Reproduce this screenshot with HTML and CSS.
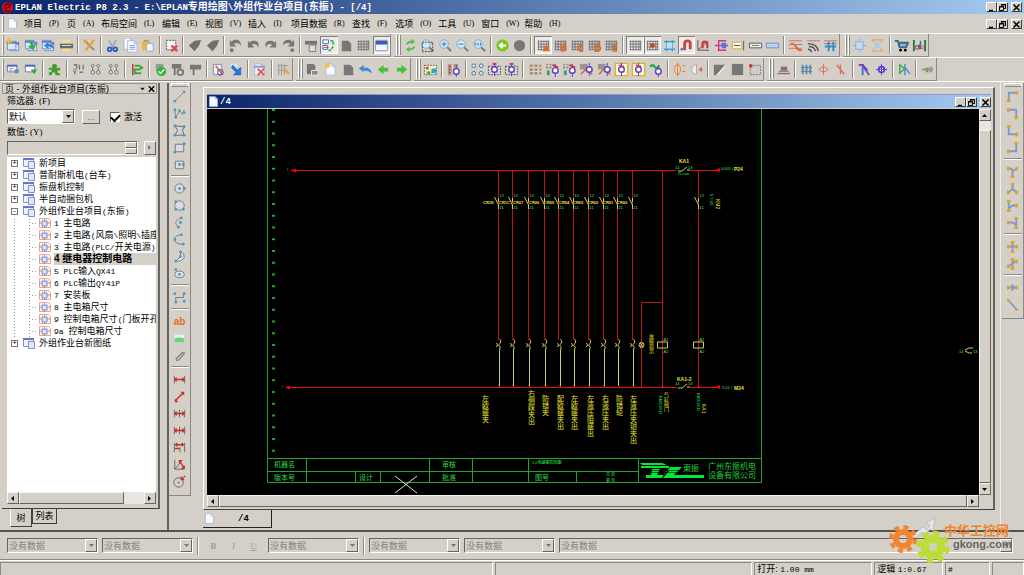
FILE: index.html
```html
<!DOCTYPE html>
<html lang="zh-CN">
<head>
<meta charset="utf-8">
<title>EPLAN Electric P8 2.3</title>
<link rel="stylesheet" href="styles.css">
</head>
<body>
<svg class="sprite" aria-hidden="true">
<defs>
<g id="sheet"><path d="M3 2h7l3 3v9H3z" fill="#f8faff" stroke="#a9b6d8"/><path d="M10 2v3h3" fill="none" stroke="#a9b6d8"/></g>
<g id="win"><rect x="4.500" y="4.500" width="9" height="9" fill="#dbe8fb" stroke="#7c92ce"/><path d="M4 5h10v2H4z" fill="#5a76c8"/></g>
<g id="grid"><path d="M2.500 3v10M5.500 3v10M8.500 3v10M11.500 3v10M13.500 3v10M2 3.500h12M2 6.500h12M2 9.500h12M2 12.500h12" stroke="#6d7077" fill="none"/></g>
<g id="lens"><circle cx="6.500" cy="6.500" r="4.500" fill="#cfe9fa" stroke="#7fa7c6"/><path d="M10 10l4 4" stroke="#777" stroke-width="2"/></g>
<g id="coil"><circle cx="8" cy="8" r="3" fill="#fff" stroke="#5a3fc8" stroke-width="1.500"/><path d="M8 1v4M8 11v4" stroke="#5a3fc8"/></g>
</defs>
<symbol id="new" viewBox="0 0 16 16"><use href="#win"/><use href="#win" x="-3" y="-1"/><path d="M3 0v7M0 3.500h7" stroke="#f0bd2c" stroke-width="2"/></symbol>
<symbol id="open" viewBox="0 0 16 16"><use href="#win"/><use href="#win" x="-3" y="-2"/><path d="M2 3q7-2 8 5l3-1-3 6-6-4 3-1q0-4-5-5z" fill="#2fb34a"/></symbol>
<symbol id="back" viewBox="0 0 16 16"><use href="#win"/><use href="#win" x="-3" y="-2"/><path d="M3 8l5-4v2q6 0 6 7-2-4-6-4v3z" fill="#3f7fd8"/></symbol>
<symbol id="print" viewBox="0 0 16 16"><path d="M4 2h8v4H4zM4 10h8v4H4z" fill="#f3df8b"/><path d="M1 6h14v5H1z" fill="#6c6c6c"/><path d="M3 8h10" stroke="#ddd"/></symbol>
<symbol id="tools" viewBox="0 0 16 16"><path d="M3 3l10 10" stroke="#8b8f98" stroke-width="2"/><path d="M13 2L4 13" stroke="#e9a527" stroke-width="2.500"/><path d="M1 3l3-2 2 3-3 2z" fill="#e9a527"/></symbol>
<symbol id="cut" viewBox="0 0 16 16"><path d="M4 2l5 9M12 2L7 11" stroke="#95a2b8" stroke-width="1.500"/><circle cx="5" cy="12" r="2" fill="none" stroke="#285fc4" stroke-width="2"/><circle cx="11" cy="12" r="2" fill="none" stroke="#285fc4" stroke-width="2"/></symbol>
<symbol id="copy" viewBox="0 0 16 16"><use href="#sheet" x="-2" y="-2"/><use href="#sheet" x="2" y="1"/><path d="M7 8h6M7 10h6M7 12h6" stroke="#7f97d4"/></symbol>
<symbol id="paste" viewBox="0 0 16 16"><path d="M2 3h9v10H2z" fill="#efb642"/><path d="M4 2h5v2H4z" fill="#999"/><path d="M7 6h7v8H7z" fill="#eef4ff" stroke="#9cacd8"/></symbol>
<symbol id="del" viewBox="0 0 16 16"><path d="M2.500 2.500h10v10h-10z" fill="#f4f4f4" stroke="#555" stroke-dasharray="2 1"/><path d="M8 8l6 6M14 8l-6 6" stroke="#e14848" stroke-width="2.500"/></symbol>
<symbol id="tag" viewBox="0 0 16 16"><path d="M2 8l6-5 7-1-2 6-5 6z" fill="#6f6f6f"/></symbol>
<symbol id="undo" viewBox="0 0 16 16"><path d="M2 3v7h7L6 7q5-2 7 3 2-8-6-7-2 0-3 2z" fill="#777"/></symbol>
<symbol id="undol" viewBox="0 0 16 16"><path d="M2 2v7h7L6 6q6-2 8 2 0-7-8-6L4 4z" fill="#777"/><circle cx="4" cy="13" r="2" fill="#777"/></symbol>
<symbol id="redo" viewBox="0 0 16 16"><path d="M14 3v7H7l3-3Q5 5 3 10 1 2 9 3q2 0 3 2z" fill="#777"/></symbol>
<symbol id="redol" viewBox="0 0 16 16"><path d="M14 2v7H7l3-3Q4 4 2 8 2 1 10 2l2 2z" fill="#777"/><circle cx="12" cy="13" r="2" fill="#777"/></symbol>
<symbol id="wins" viewBox="0 0 16 16"><path d="M1 3h13v4H1z" fill="#777"/><path d="M5.500 7.500h7v7h-7z" fill="#ddd" stroke="#777"/></symbol>
<symbol id="nav" viewBox="0 0 16 16"><path d="M2 2h6v4H2zM2 8h5v4H2z" fill="#fff" stroke="#5a5fc0"/><path d="M10 3h3v4M13 9l-3 4H7" stroke="#31b84a" stroke-width="2" stroke-dasharray="3 1" fill="none"/><path d="M3 10h5" stroke="#d04040"/></symbol>
<symbol id="gray" viewBox="0 0 16 16"><path d="M3 3h7l3 3v8H3z" fill="#777"/></symbol>
<symbol id="grid0" viewBox="0 0 16 16"><use href="#grid"/></symbol>
<symbol id="workspace" viewBox="0 0 16 16"><rect x="1.500" y="2.500" width="13" height="11" rx="1" fill="#f2f6ff" stroke="#8590bd"/><path d="M2 3h12v4H2z" fill="#3f5cb4"/></symbol>
<symbol id="refresh" viewBox="0 0 16 16"><path d="M3 7q1-4 6-4V1l4 3-4 3V5Q6 5 5 7zM13 9q-1 4-6 4v2l-4-3 4-3v2q3 0 4-2z" fill="#55bd4b"/></symbol>
<symbol id="zarea" viewBox="0 0 16 16"><use href="#lens"/><path d="M2.500 4.500h11v10h-11z" fill="none" stroke="#444" stroke-dasharray="2 1"/></symbol>
<symbol id="zin" viewBox="0 0 16 16"><use href="#lens"/><path d="M4 6.500h5M6.500 4v5" stroke="#2a6dac"/></symbol>
<symbol id="zout" viewBox="0 0 16 16"><use href="#lens"/><path d="M4 6.500h5" stroke="#2a6dac"/></symbol>
<symbol id="zfit" viewBox="0 0 16 16"><use href="#lens"/><path d="M4 5v3M6.500 5v3M9 5v3" stroke="#2a6dac"/></symbol>
<symbol id="goback" viewBox="0 0 16 16"><circle cx="8" cy="8" r="6.500" fill="#7dc51d"/><path d="M12 8H5M8 5L5 8l3 3" stroke="#fff" stroke-width="2" fill="none"/></symbol>
<symbol id="circ" viewBox="0 0 16 16"><circle cx="8" cy="8" r="6" fill="#777"/></symbol>
<symbol id="ga" viewBox="0 0 16 16"><use href="#grid"/><path d="M7 14l4-8 4 8z" fill="#e8662a"/></symbol>
<symbol id="gb" viewBox="0 0 16 16"><use href="#grid"/><path d="M9 7h3l2 2-1 1 1 2-2 2H9zM9 10.500h4" fill="none" stroke="#e8662a" stroke-width="1.500"/></symbol>
<symbol id="gc" viewBox="0 0 16 16"><use href="#grid"/><path d="M14 8h-3l-2 2v2l2 2h3" fill="none" stroke="#e8662a" stroke-width="2"/></symbol>
<symbol id="gd" viewBox="0 0 16 16"><use href="#grid"/><path d="M9 8h3l2 2v2l-2 2H9z" fill="none" stroke="#e8662a" stroke-width="2"/></symbol>
<symbol id="ge" viewBox="0 0 16 16"><use href="#grid"/><path d="M14 8h-4v6h4M10 11h4" fill="none" stroke="#e8662a" stroke-width="1.500"/></symbol>
<symbol id="gsnap" viewBox="0 0 16 16"><use href="#grid"/><circle cx="8" cy="8" r="2.500" fill="#c8441c"/></symbol>
<symbol id="osnap" viewBox="0 0 16 16"><path d="M5 2v12M11 2v12M2 4h12M2 12h12" stroke="#35a3dc" stroke-width="1.500"/><rect x="5" y="5" width="6" height="6" fill="#b9e2f5"/></symbol>
<symbol id="magnet" viewBox="0 0 16 16"><path d="M6 13V6q0-3 3-3t3 3v6" fill="none" stroke="#cf4040" stroke-width="3"/><circle cx="3" cy="12" r="1.500" fill="#3290d0"/></symbol>
<symbol id="magnet2" viewBox="0 0 16 16"><path d="M2 2v11h12M2 13L13 3" fill="none" stroke="#555"/><path d="M7 11V6q0-2 2.500-2T12 6v5" fill="none" stroke="#cf4040" stroke-width="2.500"/></symbol>
<symbol id="tree" viewBox="0 0 16 16"><path d="M1 8h14M4 3h9M4 13h9M5 3v10" stroke="#d83580" stroke-width="1.500" fill="none"/><rect x="8" y="5" width="5" height="6" fill="#5b74d5"/></symbol>
<symbol id="text" viewBox="0 0 16 16"><path d="M1.500 4.500h10v7h-10z" fill="#fffbe1" stroke="#d6a735"/><path d="M13.500 3v10M3 8h7" stroke="#555"/></symbol>
<symbol id="box" viewBox="0 0 16 16"><path d="M1.500 5.500h13v5h-13z" fill="#eef0e5" stroke="#555"/><path d="M4 8h8" stroke="#777"/></symbol>
<symbol id="boxb" viewBox="0 0 16 16"><path d="M1.500 5.500h13v5h-13z" fill="#bcd1ef" stroke="#718dc4"/></symbol>
<symbol id="wires" viewBox="0 0 16 16"><path d="M1 3h14M1 7h14M1 11h14" stroke="#c97070"/><path d="M3 6q4 0 6 4t6 3" stroke="#e8662a" stroke-width="2" fill="none"/></symbol>
<symbol id="wires2" viewBox="0 0 16 16"><path d="M1 3h14" stroke="#c97070"/><path d="M2 6q10 0 11 8M3 9q6 0 7 5M2 12q3 0 4 3" stroke="#555" stroke-width="1.500" fill="none"/></symbol>
<symbol id="wires3" viewBox="0 0 16 16"><path d="M1 3h14M1 6h14" stroke="#c97070"/><path d="M6 4v10M11 4v10M2 9h12" stroke="#2f8dc6" stroke-width="2"/></symbol>
<symbol id="cell" viewBox="0 0 16 16"><path d="M4 4h8v8H4z" fill="#c4daf3" stroke="#88aedb"/><path d="M8 1v3M8 12v3M1 8h3M12 8h3" stroke="#88aedb"/></symbol>
<symbol id="cross" viewBox="0 0 16 16"><path d="M2 2l12 12M14 2L2 14M2 2h12M2 14h12" stroke="#e79b57" fill="none"/><rect x="5" y="5" width="6" height="6" fill="#b6cadd"/></symbol>
<symbol id="cart" viewBox="0 0 16 16"><path d="M1 3h3l2 7h7l2-5H5" stroke="#39678c" stroke-width="2" fill="#89b5cf"/><circle cx="7" cy="13" r="1.500"/><circle cx="12" cy="13" r="1.500"/></symbol>
<symbol id="abbar" viewBox="0 0 16 16"><path d="M2 2v12M14 2v12" stroke="#187d4a" stroke-width="2"/><circle cx="5.500" cy="10" r="1.800" fill="none" stroke="#dc5526" stroke-width="1.500"/><path d="M7.500 7v5M9 3v9" stroke="#326fb6" stroke-width="1.500"/><circle cx="11" cy="10" r="1.500" fill="none" stroke="#dc5526"/></symbol>
<symbol id="list" viewBox="0 0 16 16"><path d="M1.500 3.500h10v7h-10z" fill="#fff" stroke="#6c78b8"/><path d="M1 3h11v2H1z" fill="#4969c3"/><path d="M9 8h5l-1 4H9z" fill="#4b98ac"/><path d="M3 7h5M3 9h4" stroke="#999"/></symbol>
<symbol id="listg" viewBox="0 0 16 16"><path d="M1.500 3.500h10v7h-10z" fill="#fff" stroke="#6c78b8"/><path d="M1 3h11v2H1z" fill="#4969c3"/><path d="M7 8h7l-3 5z" fill="#27ae3d"/></symbol>
<symbol id="puzzle" viewBox="0 0 16 16"><path d="M2 6h4q-2-4 2-4t2 4h4v3q-3-1-3 1t3 2v2H9q0-3-2-3t-2 3H2v-3q3 0 3-2T2 9z" fill="#479c30"/></symbol>
<symbol id="pins" viewBox="0 0 16 16"><path d="M3 3h3v4M4 10v3M9 3v5M13 3v5M9 11h4" stroke="#777" fill="none" stroke-width="1.500"/><circle cx="4" cy="9" r="1.500" fill="none" stroke="#777"/></symbol>
<symbol id="pins2" viewBox="0 0 16 16"><circle cx="5" cy="4" r="1.500" fill="none" stroke="#777"/><circle cx="11" cy="4" r="1.500" fill="none" stroke="#777"/><circle cx="5" cy="11" r="2" fill="none" stroke="#777"/><circle cx="11" cy="11" r="2" fill="none" stroke="#777"/><path d="M5 6v3M11 6v3" stroke="#777"/></symbol>
<symbol id="plug" viewBox="0 0 16 16"><path d="M4 2v12" stroke="#c33" stroke-width="1.500"/><path d="M6 4h5l3 2-3 2H6v4h7" fill="none" stroke="#41a33c" stroke-width="2"/></symbol>
<symbol id="check" viewBox="0 0 16 16"><path d="M3 2h8v8H3z" fill="#999"/><circle cx="9" cy="10" r="5" fill="#2db63c"/><path d="M6 10l2 2 4-4" stroke="#fff" stroke-width="1.500" fill="none"/></symbol>
<symbol id="flag" viewBox="0 0 16 16"><path d="M2 3h12v5H7v6H5V8H2z" fill="#777"/></symbol>
<symbol id="flags" viewBox="0 0 16 16"><path d="M2 2h10v5H6v7H4V7H2z" fill="#777"/><circle cx="11" cy="11" r="3" fill="none" stroke="#777" stroke-width="2"/></symbol>
<symbol id="edit" viewBox="0 0 16 16"><path d="M2.500 2.500h9v11h-9z" fill="#eef" stroke="#7e86bb"/><path d="M5 4l7 9" stroke="#d87928" stroke-width="2"/><circle cx="10" cy="11" r="3" fill="none" stroke="#43a"/></symbol>
<symbol id="down" viewBox="0 0 16 16"><path d="M2 2h7v7H2z" fill="#d4e4fb"/><path d="M4 3l5 5 4-3v9H4l3-3-5-5z" fill="#2f72cf"/></symbol>
<symbol id="delp" viewBox="0 0 16 16"><use href="#sheet"/><path d="M2 5h12" stroke="#8592cc" stroke-width="2"/><path d="M6 7l7 7M13 7l-7 7" stroke="#df5454" stroke-width="2"/></symbol>
<symbol id="rules" viewBox="0 0 16 16"><path d="M3 2v12M6 2v12M9 2v12M2 4h11M2 9h8" stroke="#999"/><path d="M9 7l5 6" stroke="#e7aa36" stroke-width="2.500"/></symbol>
<symbol id="page" viewBox="0 0 16 16"><use href="#sheet"/></symbol>
<symbol id="pagenew" viewBox="0 0 16 16"><use href="#sheet"/><path d="M5 1v6M2 4h6" stroke="#f0c23e" stroke-width="2"/></symbol>
<symbol id="pageg" viewBox="0 0 16 16"><path d="M2 2h7l2 2v9H2z" fill="#777"/><path d="M7 9h7v5H7z" fill="#888" stroke="#eee"/></symbol>
<symbol id="ublue" viewBox="0 0 16 16"><path d="M1 7l5-4v3q7-1 9 6-4-3-9-3v2z" fill="#4b87d2"/></symbol>
<symbol id="larr" viewBox="0 0 16 16"><path d="M2 8l6-5v3h5v4H8v3z" fill="#49bf38"/></symbol>
<symbol id="rarr" viewBox="0 0 16 16"><path d="M14 8L8 3v3H3v4h5v3z" fill="#49bf38"/></symbol>
<symbol id="macro" viewBox="0 0 16 16"><path d="M1.500 3.500h13v10h-13z" fill="#f8f3ba" stroke="#666" stroke-dasharray="2 1"/><path d="M3 5h3v3H3z" fill="#d94a4a"/><path d="M9 7h5v5H9z" fill="#27a6da"/><path d="M4 10h4v3H4z" fill="#42b05d"/></symbol>
<symbol id="symb" viewBox="0 0 16 16"><path d="M2 2h4v12H2zM8 2h5v4H8z" fill="#b99579"/><path d="M3 5h2M3 8h2M3 11h2" stroke="#734"/><use href="#coil" x="3" y="2"/></symbol>
<symbol id="dots" viewBox="0 0 16 16"><g fill="#d8edfb" stroke="#42718f"><circle cx="4" cy="4" r="2"/><circle cx="12" cy="4" r="2"/><circle cx="4" cy="12" r="2"/><circle cx="12" cy="12" r="2"/></g></symbol>
<symbol id="dev" viewBox="0 0 16 16"><path d="M1.500 4.500h13v9h-13z" fill="none" stroke="#555" stroke-dasharray="2 1"/><use href="#coil"/><path d="M6 2h4" stroke="#d33" stroke-width="2"/></symbol>
<symbol id="rack" viewBox="0 0 16 16"><path d="M2 4h12M2 8h12M2 12h12" stroke="#8a7c70" stroke-width="2" stroke-dasharray="3 2"/><path d="M2 3h12v10H2z" fill="none" stroke="#e6a177" stroke-dasharray="3 2"/></symbol>
<symbol id="dv1" viewBox="0 0 16 16"><path d="M1 2h6v5H1z" fill="#96958f"/><path d="M1 4h6M4 2v5" stroke="#ddd"/><path d="M2 9h3v5H2z" fill="#479d4d"/><use href="#coil" x="3" y="1"/><path d="M8 3l6 3" stroke="#d43232" stroke-width="2"/></symbol>
<symbol id="dv2" viewBox="0 0 16 16"><path d="M1 2h8v6H1z" fill="#96958f"/><path d="M2 13l5-5 7 5" fill="none" stroke="#e05a30" stroke-width="1.500"/><use href="#coil" x="3"/></symbol>
<symbol id="dv3" viewBox="0 0 16 16"><path d="M1.500 1.500h13v13h-13z" fill="#fffce4" stroke="#dfae31" stroke-width="1.500"/><use href="#coil"/><path d="M5 3l6 2" stroke="#d33" stroke-width="1.500"/></symbol>
<symbol id="dv4" viewBox="0 0 16 16"><path d="M1 5q3-3 5 0t5-1" stroke="#22a858" stroke-width="2.500" fill="none"/><use href="#coil" x="2" y="2"/></symbol>
<symbol id="orn" viewBox="0 0 16 16"><ellipse cx="6" cy="8" rx="3" ry="5" fill="#fbd9bd" stroke="#d47537"/><path d="M6 1v14M11 4h3M11 10h3" stroke="#d47537"/></symbol>
<symbol id="moon" viewBox="0 0 16 16"><path d="M8 3q-5 0-5 5t5 5z" fill="#eee" stroke="#aaa"/><path d="M14 5v6l-4-3z" fill="#df6545"/></symbol>
<symbol id="tri" viewBox="0 0 16 16"><path d="M2 3h12L4 14H2z" fill="#777"/><path d="M14 4L6 14" stroke="#fff"/></symbol>
<symbol id="sq" viewBox="0 0 16 16"><path d="M2 2h12v12H2z" fill="#777"/></symbol>
<symbol id="sel" viewBox="0 0 16 16"><path d="M3.500 3.500h11v10h-11z" fill="#ccc" stroke="#777" stroke-dasharray="2 1"/><circle cx="4" cy="4" r="2" fill="#d33"/></symbol>
<symbol id="cab" viewBox="0 0 16 16"><path d="M1 13l3-4h9l2 4z" fill="#777"/><path d="M5 5h7v4H5z" fill="#966"/><path d="M2 11h12" stroke="#ddd"/></symbol>
<symbol id="bus" viewBox="0 0 16 16"><path d="M4 3v10M8 3v10M12 3v10" stroke="#4492c9" stroke-width="2"/><path d="M2 6h12M2 10h12" stroke="#777"/></symbol>
<symbol id="rx" viewBox="0 0 16 16"><path d="M8 2v12M3 8q5-6 10 0M3 8q5 5 10 0" stroke="#df6c61" fill="none"/></symbol>
<symbol id="rx2" viewBox="0 0 16 16"><path d="M8 3v10M4 3l8 10" stroke="#df6c61" stroke-width="1.500"/></symbol>
<symbol id="junc" viewBox="0 0 16 16"><path d="M6 2v12M6 4l7 10" stroke="#4a72c9" stroke-width="2" fill="none"/><path d="M2 3h4l5 6" stroke="#7a32c5" stroke-width="2" fill="none"/></symbol>
<symbol id="target" viewBox="0 0 16 16"><circle cx="8" cy="8" r="3" fill="#fff" stroke="#5a3fd8" stroke-width="2"/><path d="M8 2v12M2 8h12" stroke="#5a3fd8"/></symbol>
<symbol id="jg" viewBox="0 0 16 16"><path d="M3 3v9l5-4.500z" stroke="#41a84e" stroke-width="1.500" fill="none"/><path d="M8.500 2v12M8 5l6 8" stroke="#4a8dc9" stroke-width="1.500"/></symbol>
<symbol id="cable" viewBox="0 0 16 16"><path d="M2 8h12" stroke="#8a8f95" stroke-width="2"/><path d="M6 6h3v5H6z" fill="#6cac48"/><path d="M10 5h3v6h-3z" fill="#999"/></symbol>
<symbol id="line" viewBox="0 0 16 16"><path d="M3 13L13 3" stroke="#888"/><circle cx="3" cy="13" r="1.500" class="dot"/><circle cx="13" cy="3" r="1.500" class="dot"/></symbol>
<symbol id="poly" viewBox="0 0 16 16"><path d="M3 4l1 8 4-7 3 4 2-5" stroke="#888" fill="none"/><circle cx="3" cy="4" r="1.500" class="dot"/><circle cx="4" cy="12" r="1.500" class="dot"/><circle cx="8" cy="5" r="1.500" class="dot"/><circle cx="13" cy="7" r="1.500" class="dot"/></symbol>
<symbol id="pgon" viewBox="0 0 16 16"><path d="M3 3l10 1-2 4 2 5H3l3-5z" stroke="#666" fill="#ccd5dc"/><circle cx="3" cy="3" r="1.500" class="dot"/><circle cx="13" cy="4" r="1.500" class="dot"/><circle cx="3" cy="13" r="1.500" class="dot"/><circle cx="13" cy="13" r="1.500" class="dot"/></symbol>
<symbol id="rect" viewBox="0 0 16 16"><path d="M3.500 4.500h9v8h-9z" stroke="#777" fill="#d7dbe0"/><circle cx="3" cy="13" r="1.500" class="dot"/><circle cx="13" cy="4" r="1.500" class="dot"/></symbol>
<symbol id="rectc" viewBox="0 0 16 16"><path d="M3.500 4.500h9v8h-9z" stroke="#777" fill="#d7dbe0"/><circle cx="8" cy="8" r="1.500" class="dot"/><circle cx="12" cy="8" r="1.500" class="dot"/></symbol>
<symbol id="cir" viewBox="0 0 16 16"><circle cx="8" cy="8" r="5" stroke="#777" fill="#d9dde2"/><circle cx="8" cy="8" r="1.500" class="dot"/><circle cx="13" cy="8" r="1.500" class="dot"/></symbol>
<symbol id="cir3" viewBox="0 0 16 16"><circle cx="8" cy="8" r="5" stroke="#777" fill="#d9dde2"/><circle cx="4" cy="4" r="1.500" class="dot"/><circle cx="4" cy="12" r="1.500" class="dot"/><circle cx="12" cy="12" r="1.500" class="dot"/></symbol>
<symbol id="arc" viewBox="0 0 16 16"><path d="M10 3q-6 1-6 6 1 4 4 4" stroke="#888" fill="none"/><circle cx="10" cy="3" r="1.500" class="dot"/><circle cx="9" cy="8" r="1.500" class="dot"/><circle cx="7" cy="13" r="1.500" class="dot"/></symbol>
<symbol id="arc3" viewBox="0 0 16 16"><path d="M10 3q-7 0-7 5t8 5" stroke="#777" fill="none"/><circle cx="10" cy="3" r="1.500" class="dot"/><circle cx="3" cy="8" r="1.500" class="dot"/><circle cx="12" cy="13" r="1.500" class="dot"/></symbol>
<symbol id="sector" viewBox="0 0 16 16"><path d="M9 3q5 2 4 6-3 5-9 4l5-5z" stroke="#777" fill="#dde1e5"/><circle cx="9" cy="3" r="1.500" class="dot"/><circle cx="9" cy="8" r="1.500" class="dot"/><circle cx="4" cy="13" r="1.500" class="dot"/></symbol>
<symbol id="ell" viewBox="0 0 16 16"><ellipse cx="8" cy="9" rx="5" ry="3.500" stroke="#777" fill="#dde1e5"/><circle cx="8" cy="9" r="1.500" class="dot"/><circle cx="4" cy="4" r="1.500" class="dot"/></symbol>
<symbol id="spline" viewBox="0 0 16 16"><path d="M4 13V8h8V4" stroke="#777" fill="none"/><circle cx="3" cy="4" r="1.500" class="dot"/><circle cx="4" cy="13" r="1.500" class="dot"/><circle cx="13" cy="4" r="1.500" class="dot"/><circle cx="13" cy="12" r="1.500" class="dot"/></symbol>
<symbol id="pic" viewBox="0 0 16 16"><path d="M3 4h10v4H3z" fill="#e0f2fa"/><path d="M3 8q5-2 10 0v4H3z" fill="#65d775"/></symbol>
<symbol id="clip" viewBox="0 0 16 16"><path d="M4 12l7-7q2-1 2 1l-6 7q-3 1-2-2l6-6" stroke="#888" stroke-width="1.500" fill="none"/></symbol>
<symbol id="dim" viewBox="0 0 16 16"><path d="M2.500 4v8M13.500 4v8" stroke="#666"/><path d="M3 8h10M5 6L3 8l2 2M11 6l2 2-2 2" stroke="#c62d2d" fill="none" stroke-width="1.500"/></symbol>
<symbol id="dimd" viewBox="0 0 16 16"><path d="M4 12l8-8" stroke="#c62d2d" stroke-width="1.500"/><path d="M3 10v4h4zM9 3h4v4z" fill="#c62d2d"/></symbol>
<symbol id="dimc" viewBox="0 0 16 16"><path d="M2.500 4v8M8 4v8M13.500 4v8" stroke="#666"/><path d="M3 8h10M5 6L3 8l2 2M11 6l2 2-2 2" stroke="#c62d2d" fill="none" stroke-width="1.500"/></symbol>
<symbol id="dimb" viewBox="0 0 16 16"><path d="M2.500 3v10M13.500 3v10M8.500 8v5" stroke="#666"/><path d="M3 5h10M3 9h5M5 3v4M11 3v4" stroke="#c62d2d" stroke-width="1.500"/></symbol>
<symbol id="dima" viewBox="0 0 16 16"><path d="M3 3v10h10M3 13l6-7" stroke="#666" fill="none"/><path d="M8 4l5 8M8 7V4h3M10 12h3V9" stroke="#c62d2d" stroke-width="1.500" fill="none"/></symbol>
<symbol id="dimr" viewBox="0 0 16 16"><circle cx="7" cy="9" r="5" stroke="#666" fill="none"/><path d="M14 2l-4 4M10 3v3h3" stroke="#c62d2d" stroke-width="1.500" fill="none"/><circle cx="7" cy="9" r="1" fill="#c55"/></symbol>
<symbol id="r1" viewBox="0 0 16 16"><path d="M4 13V4h9" class="pipe"/><path d="M2 11h4v3H2zM11 2h3v4h-3z" class="pad"/></symbol>
<symbol id="r2" viewBox="0 0 16 16"><path d="M3 4h9v9" class="pipe"/><path d="M2 2h3v4H2zM10 11h4v3h-4z" class="pad"/></symbol>
<symbol id="r3" viewBox="0 0 16 16"><path d="M4 3v9h9" class="pipe"/><path d="M2 2h4v3H2zM11 10h3v4h-3z" class="pad"/></symbol>
<symbol id="r4" viewBox="0 0 16 16"><path d="M12 3v9H3" class="pipe"/><path d="M10 2h4v3h-4zM2 10h3v4H2z" class="pad"/></symbol>
<symbol id="r5" viewBox="0 0 16 16"><path d="M3 5h4l1 3v5M8 8l4-3" class="pipe"/><path d="M2 3h3v4H2zM11 3h3v4h-3zM6 12h4v3H6z" class="pad"/></symbol>
<symbol id="r6" viewBox="0 0 16 16"><path d="M3 12l5-3V3M8 8l4 4" class="pipe"/><path d="M2 10h3v4H2zM11 10h3v4h-3zM6 2h4v3H6z" class="pad"/></symbol>
<symbol id="r7" viewBox="0 0 16 16"><path d="M4 3v10M4 11l4-3h5" class="pipe"/><path d="M2 2h4v3H2zM2 12h4v3H2zM11 6h3v4h-3z" class="pad"/></symbol>
<symbol id="r8" viewBox="0 0 16 16"><path d="M12 3v10M12 11L8 8H3" class="pipe"/><path d="M10 2h4v3h-4zM10 12h4v3h-4zM2 6h3v4H2z" class="pad"/></symbol>
<symbol id="r9" viewBox="0 0 16 16"><path d="M8 3v10M3 8h10" class="pipe"/><path d="M6 2h4v3H6zM6 12h4v3H6zM2 6h3v4H2zM11 6h3v4h-3z" class="pad"/></symbol>
<symbol id="r9b" viewBox="0 0 16 16"><path d="M8 3v10M3 11l5-3 4-3" class="pipe"/><path d="M6 2h4v3H6zM6 12h4v3H6zM2 9h3v4H2zM11 4h3v4h-3z" class="pad"/></symbol>
<symbol id="r10" viewBox="0 0 16 16"><path d="M3 8h10M7 5l3 3-3 3" class="pipe"/><path d="M2 6h3v4H2zM11 6h3v4h-3z" class="pad"/></symbol>
<symbol id="r11" viewBox="0 0 16 16"><path d="M4 4l8 9" class="pipe"/><path d="M2 2h3v3H2zM11 12h3v3h-3z" class="pad"/></symbol>
<symbol id="proj" viewBox="0 0 14 12"><path d="M.5 1.500h10v8H.5z" fill="#eef2ff" stroke="#8790c5"/><path d="M0 1h11v2H0z" fill="#6577cf"/><path d="M5.500 4.500h6v7h-6z" fill="#dfe8fc" stroke="#8790c5"/></symbol>
<symbol id="sch" viewBox="0 0 14 12"><path d="M1.500 1.500h9l2 2v7h-11z" fill="#fff3ee" stroke="#e3a79b"/><path d="M4 4h5v5H4z" fill="#d6e6fa" stroke="#6b8fcd"/><path d="M1 6h3M9 6h4M6.500 2v2M6.500 9v2" stroke="#d98476"/></symbol>
<symbol id="min" viewBox="0 0 9 9"><path d="M2 7.500h4" stroke="#000" stroke-width="1.500"/></symbol>
<symbol id="res" viewBox="0 0 9 9"><path d="M3.500 3V1.500h4v4H6M1.500 3.500h4v4h-4zM1 4h5M3 2h5" fill="none" stroke="#000"/></symbol>
<symbol id="cls" viewBox="0 0 9 9"><path d="M1.500 1.500l6 6M7.500 1.500l-6 6" stroke="#000" stroke-width="1.500"/></symbol>
<symbol id="au" viewBox="0 0 9 9"><path d="M2 6h5L4.500 3z"/></symbol>
<symbol id="ad" viewBox="0 0 9 9"><path d="M2 3h5L4.500 6z"/></symbol>
<symbol id="al" viewBox="0 0 9 9"><path d="M6 2v5L3 4.500z"/></symbol>
<symbol id="ar" viewBox="0 0 9 9"><path d="M3 2v5l3-2.500z"/></symbol>
</svg>

<header class="titlebar">
  <svg class="logo" viewBox="0 0 14 14"><circle cx="7" cy="7" r="6" fill="#d8101c"/><path d="M11 10Q5 13 4 8q0-5 4-5 3 1 1.500 3L5 8" stroke="#5a0508" stroke-width="1.500" fill="none"/></svg>
  <h1 class="caption"><span class="mono">EPLAN Electric P8 2.3 - E:\EPLAN</span>专用绘图<span class="mono">\</span>外组作业台项目<span class="mono">(</span>东振<span class="mono">) - [/4]</span></h1>
  <div class="winbtns"><button aria-label="最小化"><svg><use href="#min"/></svg></button><button aria-label="还原"><svg><use href="#res"/></svg></button><button class="close" aria-label="关闭"><svg><use href="#cls"/></svg></button></div>
</header>

<nav class="menubar">
  <i class="grip"></i><svg class="docicon"><use href="#page"/></svg>
  <button>项目<span>(P)</span></button><button>页<span>(A)</span></button><button>布局空间<span>(L)</span></button><button>编辑<span>(E)</span></button><button>视图<span>(V)</span></button><button>插入<span>(I)</span></button><button>项目数据<span>(R)</span></button><button>查找<span>(F)</span></button><button>选项<span>(O)</span></button><button>工具<span>(U)</span></button><button>窗口<span>(W)</span></button><button>帮助<span>(H)</span></button>
  <div class="winbtns"><button aria-label="最小化"><svg><use href="#min"/></svg></button><button aria-label="还原"><svg><use href="#res"/></svg></button><button class="close" aria-label="关闭"><svg><use href="#cls"/></svg></button></div>
</nav>

<div class="toolrow">
  <div class="toolbar t1"><i class="grip"></i>
    <button aria-label="新建"><svg><use href="#new"/></svg></button><button aria-label="打开"><svg><use href="#open"/></svg></button><button aria-label="恢复"><svg><use href="#back"/></svg></button><button aria-label="打印"><svg><use href="#print"/></svg></button><i class="sep"></i>
    <button aria-label="设置"><svg><use href="#tools"/></svg></button><i class="sep"></i>
    <button aria-label="剪切"><svg><use href="#cut"/></svg></button><button aria-label="复制"><svg><use href="#copy"/></svg></button><button aria-label="粘贴"><svg><use href="#paste"/></svg></button><i class="sep"></i>
    <button aria-label="删除"><svg><use href="#del"/></svg></button><i class="sep"></i>
    <button aria-label="标签"><svg><use href="#tag"/></svg></button><button aria-label="标记"><svg><use href="#tag"/></svg></button><i class="sep"></i>
    <button aria-label="撤消列表"><svg><use href="#undol"/></svg></button><button aria-label="撤消"><svg><use href="#undo"/></svg></button><button aria-label="重做"><svg><use href="#redo"/></svg></button><button aria-label="重做列表"><svg><use href="#redol"/></svg></button><i class="sep"></i>
    <button aria-label="窗口"><svg><use href="#wins"/></svg></button><button class="on" aria-label="导航器"><svg><use href="#nav"/></svg></button><button aria-label="页"><svg><use href="#gray"/></svg></button><button aria-label="表格"><svg><use href="#grid0"/></svg></button><button class="on" aria-label="工作区"><svg><use href="#workspace"/></svg></button>
  </div>
  <div class="toolbar t2"><i class="grip"></i><i class="grip"></i>
    <button aria-label="刷新"><svg><use href="#refresh"/></svg></button><button aria-label="窗口缩放"><svg><use href="#zarea"/></svg></button><button aria-label="放大"><svg><use href="#zin"/></svg></button><button aria-label="缩小"><svg><use href="#zout"/></svg></button><button aria-label="整页"><svg><use href="#zfit"/></svg></button><i class="sep"></i>
    <button aria-label="后退"><svg><use href="#goback"/></svg></button><button aria-label="前进"><svg><use href="#circ"/></svg></button><i class="sep"></i>
    <button class="on" aria-label="栅格A"><svg><use href="#ga"/></svg></button><button aria-label="栅格B"><svg><use href="#gb"/></svg></button><button aria-label="栅格C"><svg><use href="#gc"/></svg></button><button aria-label="栅格D"><svg><use href="#gd"/></svg></button><button aria-label="栅格E"><svg><use href="#ge"/></svg></button><i class="sep"></i>
    <button class="on" aria-label="栅格"><svg><use href="#grid0"/></svg></button><button class="on" aria-label="捕捉"><svg><use href="#gsnap"/></svg></button><button aria-label="对齐"><svg><use href="#osnap"/></svg></button><button class="on" aria-label="对象捕捉"><svg><use href="#magnet"/></svg></button><button aria-label="设计模式"><svg><use href="#magnet2"/></svg></button><button aria-label="连接"><svg><use href="#tree"/></svg></button><button aria-label="文本"><svg><use href="#text"/></svg></button><button aria-label="框"><svg><use href="#box"/></svg></button><button aria-label="输入框"><svg><use href="#boxb"/></svg></button><i class="sep"></i>
    <button aria-label="连线"><svg><use href="#wires"/></svg></button><button aria-label="电缆"><svg><use href="#wires2"/></svg></button><button aria-label="母线"><svg><use href="#wires3"/></svg></button>
  </div>
  <div class="toolbar t3"><i class="grip"></i><i class="grip"></i>
    <button aria-label="单元"><svg><use href="#cell"/></svg></button><button aria-label="展开"><svg><use href="#cross"/></svg></button><i class="sep"></i>
    <button aria-label="部件"><svg><use href="#cart"/></svg></button><button aria-label="翻译"><svg><use href="#abbar"/></svg></button>
  </div>
</div>

<div class="toolrow">
  <div class="toolbar t4"><i class="grip"></i>
    <button aria-label="清单"><svg><use href="#list"/></svg></button><button aria-label="更新"><svg><use href="#listg"/></svg></button><i class="sep"></i>
    <button aria-label="插件"><svg><use href="#puzzle"/></svg></button><i class="sep"></i>
    <button aria-label="触点"><svg><use href="#pins"/></svg></button><button aria-label="端子"><svg><use href="#pins2"/></svg></button><button aria-label="引脚"><svg><use href="#pins2"/></svg></button><i class="sep"></i>
    <button aria-label="插头"><svg><use href="#plug"/></svg></button><i class="sep"></i>
    <button aria-label="检查"><svg><use href="#check"/></svg></button><button aria-label="消息"><svg><use href="#flags"/></svg></button><button aria-label="标志"><svg><use href="#flag"/></svg></button><i class="sep"></i>
    <button aria-label="编辑"><svg><use href="#edit"/></svg></button><button aria-label="导入"><svg><use href="#down"/></svg></button><i class="sep"></i>
    <button aria-label="移除"><svg><use href="#delp"/></svg></button><i class="sep"></i>
    <button aria-label="规则"><svg><use href="#rules"/></svg></button>
  </div>
  <div class="toolbar t5"><i class="grip"></i><i class="grip"></i>
    <button aria-label="页宏"><svg><use href="#pageg"/></svg></button><button aria-label="新建页"><svg><use href="#pagenew"/></svg></button><button aria-label="页属性"><svg><use href="#gray"/></svg></button><button aria-label="返回"><svg><use href="#ublue"/></svg></button><button aria-label="上一页"><svg><use href="#larr"/></svg></button><button aria-label="下一页"><svg><use href="#rarr"/></svg></button>
  </div>
  <div class="toolbar t6"><i class="grip"></i><i class="grip"></i>
    <button aria-label="宏"><svg><use href="#macro"/></svg></button><i class="sep"></i>
    <button aria-label="符号"><svg><use href="#symb"/></svg></button><i class="sep"></i>
    <button aria-label="黑盒"><svg><use href="#dots"/></svg></button><button aria-label="设备"><svg><use href="#dev"/></svg></button><button aria-label="设备端子"><svg><use href="#dev"/></svg></button><i class="sep"></i>
    <button aria-label="机架"><svg><use href="#rack"/></svg></button><button aria-label="设备1"><svg><use href="#dv1"/></svg></button><button aria-label="设备2"><svg><use href="#dv1"/></svg></button><button aria-label="设备3"><svg><use href="#dv2"/></svg></button><button aria-label="设备4"><svg><use href="#dv2"/></svg></button><button aria-label="设备5"><svg><use href="#dv3"/></svg></button><button aria-label="设备6"><svg><use href="#dv3"/></svg></button><button aria-label="设备7"><svg><use href="#dv4"/></svg></button><i class="sep"></i>
    <button aria-label="屏蔽"><svg><use href="#orn"/></svg></button><button aria-label="中断"><svg><use href="#moon"/></svg></button><i class="sep"></i>
    <button aria-label="角"><svg><use href="#tri"/></svg></button><button aria-label="面"><svg><use href="#sq"/></svg></button><button aria-label="选择"><svg><use href="#sel"/></svg></button>
  </div>
  <div class="toolbar t7"><i class="grip"></i><i class="grip"></i>
    <button aria-label="安装板"><svg><use href="#cab"/></svg></button><i class="sep"></i>
    <button aria-label="总线"><svg><use href="#bus"/></svg></button><button aria-label="断点"><svg><use href="#rx"/></svg></button><button aria-label="交叉"><svg><use href="#rx2"/></svg></button><i class="sep"></i>
    <button aria-label="节点"><svg><use href="#junc"/></svg></button><button aria-label="电位"><svg><use href="#target"/></svg></button><i class="sep"></i>
    <button aria-label="网络"><svg><use href="#jg"/></svg></button><i class="sep"></i>
    <button aria-label="电缆"><svg><use href="#cable"/></svg></button>
  </div>
</div>

<main class="work">
  <aside class="navigator">
    <section class="panel">
      <h2 class="panelhead"><span>页 - 外组作业台项目(东振)</span><button aria-label="菜单"><svg><use href="#ad"/></svg></button><button aria-label="关闭"><svg><use href="#cls"/></svg></button></h2>
      <div class="filters">
        <label for="filter">筛选器: <span class="serif">(F)</span></label>
        <div class="frow"><span class="combo"><select id="filter"><option>默认</option></select><i class="drop"><svg><use href="#ad"/></svg></i></span><button class="more">...</button><label class="tick"><input type="checkbox" checked>激活</label></div>
        <label for="value">数值: <span class="serif">(Y)</span></label>
        <div class="frow"><span class="spin"><input id="value" type="text"><span><button aria-label="上"></button><button aria-label="下"></button></span></span><button class="go" aria-label="应用"><svg><use href="#ar"/></svg></button></div>
      </div>
      <div class="treebox">
        <ul class="tree">
          <li><i class="pm">+</i><svg><use href="#proj"/></svg>新项目</li>
          <li><i class="pm">+</i><svg><use href="#proj"/></svg>普耐斯机电<b>(</b>台车<b>)</b></li>
          <li><i class="pm">+</i><svg><use href="#proj"/></svg>振盘机控制</li>
          <li><i class="pm">+</i><svg><use href="#proj"/></svg>半自动捆包机</li>
          <li><i class="pm">-</i><svg><use href="#proj"/></svg>外组作业台项目<b>(</b>东振<b>)</b></li>
          <li class="kid"><svg><use href="#sch"/></svg><b>1 </b>主电路</li>
          <li class="kid"><svg><use href="#sch"/></svg><b>2 </b>主电路<b>(</b>风扇<b>\</b>照明<b>\</b>插座<b>)</b></li>
          <li class="kid"><svg><use href="#sch"/></svg><b>3 </b>主电路<b>(PLC/</b>开关电源<b>)</b></li>
          <li class="kid cur"><svg><use href="#sch"/></svg><span>4 继电器控制电路</span></li>
          <li class="kid"><svg><use href="#sch"/></svg><b>5 PLC</b>输入<b>QX41</b></li>
          <li class="kid"><svg><use href="#sch"/></svg><b>6 PLC</b>输出<b>QY41P</b></li>
          <li class="kid"><svg><use href="#sch"/></svg><b>7 </b>安装板</li>
          <li class="kid"><svg><use href="#sch"/></svg><b>8 </b>主电箱尺寸</li>
          <li class="kid"><svg><use href="#sch"/></svg><b>9 </b>控制电箱尺寸<b>(</b>门板开孔<b>)</b></li>
          <li class="kid"><svg><use href="#sch"/></svg><b>9a </b>控制电箱尺寸</li>
          <li><i class="pm">+</i><svg><use href="#proj"/></svg>外组作业台新图纸</li>
        </ul>
        <div class="hscroll"><button aria-label="左"><svg><use href="#al"/></svg></button><i class="thumb"></i><i class="track"></i><button aria-label="右"><svg><use href="#ar"/></svg></button></div>
      </div>
    </section>
    <div class="tabs"><button class="active">树</button><button>列表</button></div>
  </aside>

  <div class="vdock left"><div class="vbar"><i class="hgrip"></i>
    <button aria-label="直线"><svg><use href="#line"/></svg></button><button aria-label="折线"><svg><use href="#poly"/></svg></button><button aria-label="多边形"><svg><use href="#pgon"/></svg></button><button aria-label="长方形"><svg><use href="#rect"/></svg></button><button aria-label="中心长方形"><svg><use href="#rectc"/></svg></button><i class="hsep"></i>
    <button aria-label="圆"><svg><use href="#cir"/></svg></button><button aria-label="三点圆"><svg><use href="#cir3"/></svg></button><button aria-label="圆弧"><svg><use href="#arc"/></svg></button><button aria-label="三点圆弧"><svg><use href="#arc3"/></svg></button><button aria-label="扇形"><svg><use href="#sector"/></svg></button><button aria-label="椭圆"><svg><use href="#ell"/></svg></button><i class="hsep"></i>
    <button aria-label="样条"><svg><use href="#spline"/></svg></button><i class="hsep"></i>
    <button class="ab">ab</button><button aria-label="图片"><svg><use href="#pic"/></svg></button><button aria-label="超链接"><svg><use href="#clip"/></svg></button><i class="hsep"></i>
    <button aria-label="线性尺寸"><svg><use href="#dim"/></svg></button><button aria-label="对齐尺寸"><svg><use href="#dimd"/></svg></button><button aria-label="连续尺寸"><svg><use href="#dimc"/></svg></button><button aria-label="增量尺寸"><svg><use href="#dimc"/></svg></button><button aria-label="基线尺寸"><svg><use href="#dimb"/></svg></button><button aria-label="角度尺寸"><svg><use href="#dima"/></svg></button><button aria-label="半径尺寸"><svg><use href="#dimr"/></svg></button>
  </div></div>

  <div class="mdi">
    <section class="child">
      <header class="childbar"><svg class="docicon"><use href="#page"/></svg><h2>/4</h2><div class="winbtns"><button aria-label="最小化"><svg><use href="#min"/></svg></button><button aria-label="还原"><svg><use href="#res"/></svg></button><button class="close" aria-label="关闭"><svg><use href="#cls"/></svg></button></div></header>
      <div class="view">
        <svg class="sheet" viewBox="207 110 772 384" preserveAspectRatio="xMinYMin meet">
          <g class="frame" fill="none">
            <path d="M267.500 110V483.500H761.500V110M267 459.500H762M267 472.500H638M306.500 459V484M355.500 472V484M380.500 472V484M429.500 459V484M472.500 459V484M528.500 459V484M576.500 472V484M638.500 459V484"/>
            <path d="M273.500 110V454" stroke-width="3" stroke-dasharray="2 9.750"/>
          </g>
          <g class="wire" fill="none">
            <path d="M291 171.500H676M690 171.500H718M286 388.500H677M690 388.500H718"/>
            <path class="dim" d="M498.500 171V341M512.500 171V341M528.500 171V341M544.500 171V341M558.500 171V341M573.500 171V341M588.500 171V341M603.500 171V341M617.500 171V341M632.500 171V341M662.500 171V388M698.500 171V388M641.500 388V303.500H662"/>
            <path fill="#f00" stroke="none" d="M291 171.500l5-2v4zM285 388.500l5-2v4zM720 169v4l-5-2zM720 386v4l-5-2z"/>
            <path d="M498 386l3 3M512 386l3 3M528 386l4 3M544 386l4 3M559 386l3 3M573 386l3 3M588 386l3 3M603 386l3 3M618 386l3 3M632 386l4 3M662 386l3 3M698 386l3 3"/>
          </g>
          <defs>
            <g id="sw"><path d="M0 199V203M-4 198L0 206V210" class="yel"/><text x="1" y="198" class="g">12</text><text x="1" y="210" class="g">11</text></g>
            <g id="plugin"><path d="M0 340q3 3-1 6 3 2 1 5v36M-3 344q2 2 0 4" class="yel"/></g>
            <g id="relay"><path d="M-5 343H5V349H-5z" class="yel" fill="#000"/><text x="1" y="342" class="g">A1</text><text x="1" y="354" class="g">A2</text></g>
          </defs>
          <use href="#sw" x="498.500"/><use href="#sw" x="512.500"/><use href="#sw" x="528.500"/><use href="#sw" x="544.500"/><use href="#sw" x="558.500"/><use href="#sw" x="573.500"/><use href="#sw" x="588.500"/><use href="#sw" x="603.500"/><use href="#sw" x="617.500"/><use href="#sw" x="632.500"/><use href="#sw" x="698.500"/>
          <use href="#plugin" x="499.500"/><use href="#plugin" x="513.500"/><use href="#plugin" x="529.500"/><use href="#plugin" x="545.500"/><use href="#plugin" x="560.500"/><use href="#plugin" x="574.500"/><use href="#plugin" x="589.500"/><use href="#plugin" x="604.500"/><use href="#plugin" x="618.500"/><use href="#plugin" x="633.500"/>
          <use href="#relay" x="662.500"/><use href="#relay" x="698.500"/>
          <g class="yel"><circle cx="641.500" cy="346" r="2.500"/><path d="M640 344l3 4M643 344l-3 4M678 172h4l5-4M687 171h3M678 389h4l5-4M687 388h3M965 351l4-2h4M965 352l4 2h3"/></g>
          <g class="y tag"><text x="483" y="205">CR1D</text><text x="499" y="205">CR1C</text><text x="513" y="205">CR07</text><text x="529" y="205">CR06</text><text x="544" y="205">CR05</text><text x="559" y="205">CR04</text><text x="573" y="205">CR03</text><text x="588" y="205">CR02</text><text x="603" y="205">CR01</text><text x="617" y="205">CR00</text></g>
          <g class="y tiny"><text x="679" y="164">KA1</text><text x="734" y="172">P24</text><text x="677" y="382">KA1-2</text><text x="734" y="391">M24</text></g>
          <g class="g"><text x="675" y="170">14</text><text x="688" y="170">13</text><text x="678" y="176">/5.con</text><text x="721" y="171">0.001 /</text><text x="722" y="390">5.01 /</text><text x="675" y="386">14</text><text x="688" y="386">13</text><text x="959" y="354">14</text><text x="973" y="354">13</text><text x="287" y="172">/</text><text x="282" y="389">/</text></g>
          <g class="y vert"><text x="485" y="396">左欧盛夹</text><text x="531" y="391">右侧踩夹出</text><text x="545" y="396">防错夹</text><text x="560" y="396">配欧盛夹出</text><text x="574" y="396">左欧盛夹出</text><text x="590" y="396">左液压阻盛出</text><text x="605" y="396">右液压夹出</text><text x="619" y="396">防错轮</text><text x="633" y="396">左液压夹钳夹出</text><text class="sm" x="651" y="335">故障指示</text><text class="sm" x="666" y="393">气缸阀门</text></g>
          <g class="side"><text class="y" transform="translate(702 405) rotate(90)">KA1</text><text class="g" transform="translate(659 397) rotate(90)">KM2/24:D</text><text class="g" transform="translate(697 394) rotate(90)">KM2/24:D</text><text class="y" transform="translate(716 200) rotate(90)">KM2</text><text class="g" transform="translate(710 195) rotate(90)">5.7:40</text></g>
          <g class="blk"><text x="274" y="468">机器名</text><text x="274" y="481">版本号</text><text x="442" y="468">审核</text><text x="442" y="481">批准</text><text x="359" y="481">设计</text><text x="535" y="481">图号</text><text class="g" x="532" y="465">1.0电路图控制图</text><text class="g" x="606" y="477">共 页</text><text class="g" x="606" y="483">第 页</text></g>
          <path fill="#00e83a" d="M640 464h22l5 2h-25zM641 467h28v2h-28zM652 470h8l-3 6h7l6-8h12l-8 8h30v3h-41l6-7h-3l-4 7h-16v-3h5z"/>
          <path d="M646 471.500h58M646 473.500h58" stroke="#000" stroke-width=".6"/>
          <g class="brand"><text x="683" y="472">東振</text><text x="708" y="470">广州东振机电</text><text x="708" y="479">设备有限公司</text></g>
          <path d="M395 477l22 17M417 477l-22 17" stroke="#ddd" fill="none"/>
        </svg>
        <div class="vscroll"><button aria-label="上"><svg><use href="#au"/></svg></button><i class="track"></i><i class="thumb"></i><button aria-label="下"><svg><use href="#ad"/></svg></button></div>
        <div class="hscroll"><button aria-label="左"><svg><use href="#al"/></svg></button><i class="thumb"></i><button aria-label="右"><svg><use href="#ar"/></svg></button></div>
        <i></i>
      </div>
    </section>
    <div class="doctabs"><button><svg class="docicon"><use href="#page"/></svg><span>/4</span></button><i></i></div>
  </div>

  <div class="vdock right"><div class="vbar"><i class="hgrip"></i>
    <button aria-label="角右下"><svg><use href="#r1"/></svg></button><button aria-label="角左下"><svg><use href="#r2"/></svg></button><button aria-label="角右上"><svg><use href="#r3"/></svg></button><button aria-label="角左上"><svg><use href="#r4"/></svg></button><i class="hsep"></i>
    <button aria-label="T节点下"><svg><use href="#r5"/></svg></button><button aria-label="T节点上"><svg><use href="#r6"/></svg></button><button aria-label="T节点右"><svg><use href="#r7"/></svg></button><button aria-label="T节点左"><svg><use href="#r8"/></svg></button><i class="hsep"></i>
    <button aria-label="十字"><svg><use href="#r9"/></svg></button><button aria-label="跳线"><svg><use href="#r9b"/></svg></button><i class="hsep"></i>
    <button aria-label="中断点"><svg><use href="#r10"/></svg></button><button aria-label="对角线"><svg><use href="#r11"/></svg></button>
  </div></div>
</main>

<div class="formatbar">
  <span class="combo"><select disabled aria-label="层"><option>没有数据</option></select><i class="drop"><svg><use href="#ad"/></svg></i></span>
  <span class="combo"><select disabled aria-label="字号"><option>没有数据</option></select><i class="drop"><svg><use href="#ad"/></svg></i></span>
  <i class="sep"></i>
  <span class="biu"><button disabled><b>B</b></button><button disabled><em>I</em></button><button disabled><u>U</u></button></span>
  <span class="combo"><select disabled aria-label="线宽"><option>没有数据</option></select><i class="drop"><svg><use href="#ad"/></svg></i></span>
  <i class="sep"></i>
  <span class="combo"><select disabled aria-label="颜色"><option>没有数据</option></select><i class="drop"><svg><use href="#ad"/></svg></i></span>
  <span class="combo"><select disabled aria-label="线型"><option>没有数据</option></select><i class="drop"><svg><use href="#ad"/></svg></i></span>
  <span class="combo wide"><select disabled aria-label="样式"><option>没有数据</option></select><i class="drop"><svg><use href="#ad"/></svg></i></span>
</div>

<footer class="statusbar"><span></span><span></span><span>打开: <b>1.00 mm</b></span><span>逻辑 <b>1:0.67</b></span><span><b>#</b></span><span></span></footer>

<svg class="watermark" viewBox="0 0 136 60" role="img" aria-label="gkong.com">
  <path d="M26 20l10-8 4 3 3-5-4-2 9-5-2 13-3-2-4 6-4-3-7 6z" fill="#e3e5e6" stroke="#aeb1b3" stroke-width=".6"/>
  <g fill="none"><circle cx="16" cy="24" r="7" stroke="#f28430" stroke-width="6"/><circle cx="16" cy="24" r="12" stroke="#f28430" stroke-width="4" stroke-dasharray="5 4.425"/>
  <circle cx="46" cy="32" r="8" stroke="#bcdc38" stroke-width="8"/><circle cx="46" cy="32" r="14" stroke="#bcdc38" stroke-width="5" stroke-dasharray="6 4.996"/></g>
  <text x="57" y="20" class="wm1">中华工控网</text><text x="66" y="33" class="wm2">gkong.com</text>
</svg>
</body>
</html>
```
FILE: styles.css
```css
* { box-sizing: border-box; }
html, body { margin: 0; height: 100%; }
body {
  display: flex; flex-direction: column; overflow: hidden; position: relative;
  background: #d4d0c8; color: #000;
  font: 9px/12px "Liberation Sans", "Noto Sans CJK SC", sans-serif;
}
h1, h2, ul { margin: 0; padding: 0; font: inherit; list-style: none; }
i { font-style: normal; }
button { font: inherit; color: inherit; background: none; border: 0; padding: 0; margin: 0; }
svg { display: block; flex: none; }
.sprite { position: absolute; width: 0; height: 0; }
.dot { fill: #459cc8; }
.pipe { fill: none; stroke: #7f98d0; stroke-width: 2; }
.pad { fill: #dca52e; }
.serif { font-family: "Liberation Serif", serif; }

.titlebar {
  flex: none; height: 14px; display: flex; align-items: center; gap: 1px; padding: 0 2px 0 1px;
  color: #fff; background: linear-gradient(90deg, #0a246a, #a6caf0);
}
.logo { width: 13px; height: 13px; }
.caption { flex: 1; font-size: 10px; font-weight: bold; line-height: 14px; white-space: pre; }
.mono { font: bold 9px "Liberation Mono", monospace; }
.winbtns { display: flex; margin-left: auto; }
.winbtns button {
  width: 11px; height: 10px; background: #d4d0c8; border: 1px solid;
  border-color: #fff #404040 #404040 #fff; display: grid; place-items: center;
}
.winbtns svg { width: 9px; height: 9px; }
.winbtns .close { margin-left: 3px; }

.menubar { flex: none; height: 19px; display: flex; align-items: center; padding: 0 2px; }
.menubar > button { margin-right: 9px; display: flex; gap: 7px; white-space: nowrap; }
.menubar > button span { width: 9px; font: 8px/12px "Liberation Serif", serif; }
.docicon { width: 13px; height: 13px; }
.menubar .docicon { margin-right: 5px; }
.grip { flex: none; width: 2px; height: 16px; margin-right: 2px; border-left: 1px solid #fff; border-right: 1px solid #8c8982; }

.toolrow { flex: none; height: 24px; display: flex; gap: 3px; border-top: 1px solid #fff; }
.toolbar { display: flex; align-items: center; padding-left: 2px; height: 23px; border-right: 1px solid #8c8982; border-bottom: 1px solid #8c8982; }
.toolbar .grip { height: 20px; margin-right: 1px; }
.toolbar button { flex: 1 1 17px; height: 18px; display: grid; place-items: center; }
.toolbar button svg { width: 15px; height: 15px; }
.toolbar .on { background: #ecebe6; box-shadow: inset 1px 1px #808080, inset -1px -1px #fff; }
.sep { flex: none; width: 2px; height: 18px; margin: 0 2px; border-left: 1px solid #8c8982; border-right: 1px solid #fff; }
.t1 { flex: 0 0 391px; }
.t2 { flex: 0 0 446px; }
.t3 { flex: 0 0 86px; }
.t4 { flex: 0 0 293px; }
.t5 { flex: 0 0 115px; }
.t6 { flex: 0 0 350px; }
.t7 { flex: 0 0 170px; }

.work { flex: 1; min-height: 0; display: flex; padding-top: 1px; border-top: 1px solid #fff; }
.navigator { flex: 0 0 160px; min-width: 0; display: flex; flex-direction: column; padding-left: 2px; }
.panel { flex: 1; min-height: 0; min-width: 0; display: flex; flex-direction: column; border-right: 2px solid #65635e; border-bottom: 1px solid #404040; padding-right: 1px; }
.panelhead { display: flex; align-items: center; height: 11px; border: 1px solid #99968f; line-height: 10px; padding-left: 2px; }
.panelhead span { flex: 1; white-space: nowrap; }
.panelhead svg { width: 9px; height: 8px; }
.filters { padding: 1px 1px 1px 5px; display: flex; flex-direction: column; gap: 1px; }
.frow { display: flex; align-items: center; height: 17px; }
.combo { position: relative; display: flex; height: 15px; border: 1px solid; border-color: #67645e #fff #fff #67645e; background: #fff; }
.combo select { appearance: none; flex: 1; min-width: 0; border: 0; padding: 0 14px 0 1px; background: none; font: inherit; color: #000; opacity: 1; }
.drop { position: absolute; right: 0; top: 0; bottom: 0; width: 12px; background: #d4d0c8; border: 1px solid; border-color: #fff #67645e #67645e #fff; display: grid; place-items: center; pointer-events: none; }
.drop svg { width: 9px; height: 9px; }
.frow .combo { width: 68px; }
.more, .go { border: 1px solid; border-color: #fff #67645e #67645e #fff; height: 14px; color: #777; }
.more { width: 18px; margin-left: 7px; line-height: 8px; }
.go { width: 12px; margin-left: auto; }
.go svg { width: 9px; height: 9px; fill: #5c7fc8; }
.tick { display: flex; align-items: center; gap: 4px; margin-left: 10px; white-space: nowrap; }
.tick input {
  appearance: none; width: 10px; height: 10px; margin: 0; background: #fff; border: 1px solid;
  border-color: #67645e #fff #fff #67645e; display: grid; place-items: center;
}
.tick input:checked::before { content: ""; width: 7px; height: 4px; border: solid #000; border-width: 0 0 2px 2px; transform: rotate(-45deg); }
.spin { display: flex; flex: 0 0 125px; height: 14px; border: 1px solid; border-color: #67645e #fff #fff #67645e; }
.spin input { flex: 1; min-width: 0; border: 0; padding: 0; background: none; font: inherit; }
.spin span { width: 12px; display: grid; }
.spin button { border: 1px solid; border-color: #fff #67645e #67645e #fff; }
.treebox { flex: 1; min-height: 0; min-width: 0; margin: 0 1px 4px 5px; background: #fff; display: flex; flex-direction: column; }
.tree { flex: 1; overflow: hidden; white-space: nowrap; }
.tree li { height: 12px; display: flex; align-items: center; padding-left: 4px; white-space: pre; }
.tree li > svg { width: 14px; height: 12px; margin: 0 2px 0 5px; }
.tree .kid { padding-left: 26px; background: repeating-linear-gradient(0deg, #999 0 1px, #fff 1px 3px) 7px 0 / 1px 12px no-repeat, repeating-linear-gradient(0deg, #999 0 1px, #fff 1px 3px) 22px 0 / 1px 12px no-repeat, repeating-linear-gradient(90deg, #999 0 1px, #fff 1px 3px) 22px 6px / 8px 1px no-repeat; }
.tree b { font: 8px "Liberation Mono", monospace; }
.tree .cur span { flex: 1; font-size: 10px; font-weight: bold; background: #d4d0c8; }
.pm { flex: none; width: 7px; height: 7px; border: 1px solid #777; font: 7px/5px "Liberation Mono", monospace; text-align: center; }
.hscroll, .vscroll { display: flex; background: #e8e6e1; }
.hscroll { height: 12px; }
.hscroll button, .vscroll button, .thumb { background: #d4d0c8; border: 1px solid; border-color: #f4f3f0 #67645e #67645e #f4f3f0; }
.hscroll button { width: 12px; }
.hscroll .thumb { flex: 5; }
.hscroll .track { flex: 1; }
.hscroll svg, .vscroll svg { width: 9px; height: 9px; }
.tabs { height: 21px; display: flex; align-items: flex-start; padding-left: 8px; }
.tabs button { height: 15px; width: 25px; border: 1px solid #404040; border-top: 0; }
.tabs .active { height: 18px; width: 22px; border-left-color: #fff; }

.vdock { flex: none; display: flex; align-items: flex-start; }
.vdock.left { width: 36px; margin-left: 7px; border-left: 2px solid #65635e; }
.vdock.right { width: 24px; padding-left: 1px; border-left: 1px solid #eee; }
.vbar { width: 22px; display: flex; flex-direction: column; align-items: center; padding-bottom: 5px; border-right: 1px solid #8c8982; border-bottom: 1px solid #8c8982; }
.vbar button { width: 18px; height: 17px; display: grid; place-items: center; }
.vbar svg { width: 15px; height: 15px; }
.hgrip { width: 18px; height: 4px; margin-bottom: 1px; border: 1px solid; border-color: #fff #fff #8c8982; }
.hsep { width: 18px; height: 2px; margin: 2px 0 3px; border-top: 1px solid #8c8982; border-bottom: 1px solid #fff; }
.vbar .ab { color: #e06a2b; font-size: 10px; font-weight: bold; line-height: 14px; }

.mdi { flex: 1; min-width: 0; display: flex; flex-direction: column; padding-top: 4px; }
.child { flex: 1; min-height: 0; display: flex; flex-direction: column; margin-right: 5px; border: 1px solid #fff; border-right: 2px solid #65635e; border-bottom: 1px solid #404040; padding: 6px 2px 2px 3px; }
.childbar { flex: none; height: 14px; display: flex; align-items: center; color: #fff; background: linear-gradient(90deg, #0a246a, #a6caf0); border-top: 1px solid #8c9bc0; }
.childbar h2 { font: bold 9px "Liberation Mono", monospace; }
.view { flex: 1; min-height: 0; margin-top: 1px; display: grid; grid-template: 1fr 12px / 1fr 12px; }
.view > .sheet { width: 100%; height: 100%; min-height: 0; background: #000; }
.vscroll { flex-direction: column; }
.vscroll button { height: 12px; width: 12px; }
.vscroll .track { height: 9px; }
.vscroll .thumb { flex: 1; }
.doctabs { height: 20px; display: flex; align-items: flex-start; }
.doctabs button { width: 69px; height: 18px; display: flex; align-items: center; border-right: 1px solid #222; border-bottom: 1px solid #222; }
.doctabs span { flex: 1; font: bold 9px "Liberation Mono", monospace; }
.doctabs > i { flex: 1; }

.frame { stroke: #1da52c; }
.wire { stroke: #e01010; }
.wire .dim { stroke: #b81414; }
.yel { stroke: #cfcf68; fill: none; }
.y { fill: #e8e432; }
.g { fill: #30e850; font-size: 4px; }
.tag { font-size: 4px; font-weight: bold; }
.tiny { font-size: 5px; font-weight: bold; }
.vert { font-size: 7px; writing-mode: vertical-rl; text-orientation: upright; }
.vert .sm { font-size: 5px; }
.side { font-size: 5px; }
.blk { fill: #30d84a; font-size: 7px; }
.brand { fill: #1fd03a; font-size: 8px; }

.formatbar { flex: none; height: 30px; display: flex; align-items: center; padding: 0 11px 0 7px; gap: 4px; border-top: 2px solid #55534e; border-bottom: 1px solid #8c8982; }
.formatbar .combo { flex: 0 0 91px; background: #d4d0c8; }
.formatbar .combo select { color: #85827b; }
.formatbar .combo .drop svg { fill: #777; }
.formatbar .combo.wide { flex: 1; }
.formatbar .sep { margin: 0; }
.biu { display: flex; flex: 0 0 61px; color: #a09d96; font: 9px "Liberation Serif", serif; }
.biu button { flex: 1; }
.statusbar { flex: none; height: 15px; display: grid; grid-template-columns: 493fr 258fr 118fr 69fr 45fr 32fr; gap: 2px; border-top: 1px solid #fff; padding-top: 1px; }
.statusbar span { border: 1px solid; border-color: #8c8982 #fff transparent #8c8982; padding-left: 2px; white-space: nowrap; }
.statusbar b { font: 8px "Liberation Mono", monospace; }
.watermark { position: absolute; right: 1px; bottom: 0; width: 136px; height: 60px; }
.wm1 { font: bold 13px "Noto Sans CJK SC", sans-serif; fill: #f28430; }
.wm2 { font: bold 11px "Liberation Sans", sans-serif; fill: #666; }
```
